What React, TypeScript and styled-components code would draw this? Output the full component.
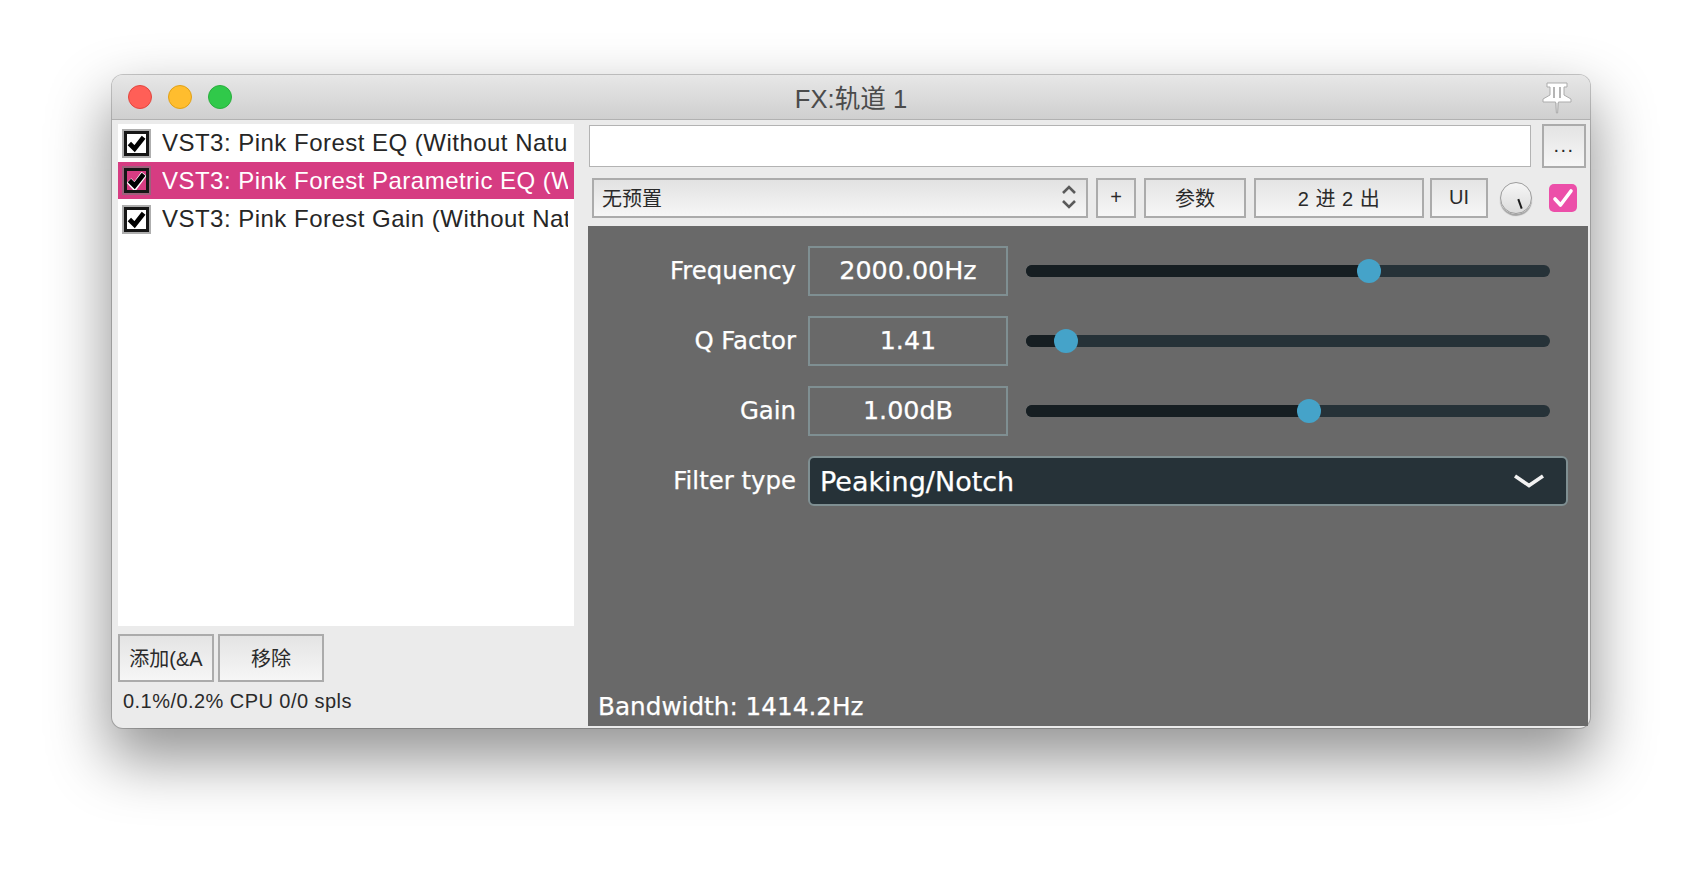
import React from "react";
import styled, { createGlobalStyle } from "styled-components";

const UI_FONT = `"Liberation Sans", "Noto Sans CJK SC", sans-serif`;
const PARAM_FONT = `"DejaVu Sans", sans-serif`;

const Global = createGlobalStyle`
  html, body { margin: 0; padding: 0; background: #fff; height: 100%; overflow: hidden; }
  * { box-sizing: border-box; }
`;

const Page = styled.div`
  width: 1702px;
  height: 876px;
  padding: 75px 0 0 112px;
  background: #fff;
  font-family: ${UI_FONT};
`;

const Window = styled.div`
  position: relative;
  width: 1478px;
  height: 653px;
  display: flex;
  flex-direction: column;
  background: #ebebeb;
  border-radius: 11px;
  box-shadow: 0 0 0 1px rgba(0, 0, 0, 0.2), 0 28px 60px 4px rgba(0, 0, 0, 0.42);
`;

const TitleBar = styled.div`
  flex: none;
  height: 45px;
  display: flex;
  align-items: center;
  padding-left: 16px;
  gap: 16px;
  position: relative;
  border-radius: 11px 11px 0 0;
  background: linear-gradient(#e7e7e7, #cfcfcf);
  border-bottom: 1px solid #b1b1b1;
`;

const Light = styled.span<{ $fill: string; $edge: string }>`
  width: 24px;
  height: 24px;
  border-radius: 50%;
  background: ${(p) => p.$fill};
  border: 1px solid ${(p) => p.$edge};
`;

const Title = styled.div`
  position: absolute;
  inset: 0;
  display: flex;
  align-items: center;
  justify-content: center;
  padding-bottom: 2px;
  font-size: 25.6px;
  color: #4b4b4b;
`;

const Pin = styled.svg`
  position: absolute;
  right: 17px;
  top: 7px;
`;

const Body = styled.div`
  flex: 1;
  display: flex;
  min-height: 0;
`;

const LeftPane = styled.div`
  flex: none;
  width: 476px;
  padding: 4px 0 0 6px;
  display: flex;
  flex-direction: column;
`;

const List = styled.div`
  width: 456px;
  height: 502px;
  background: #fff;
  flex: none;
`;

const Row = styled.div<{ $on?: boolean }>`
  height: ${(p) => (p.$on ? 37 : 38)}px;
  margin-bottom: ${(p) => (p.$on ? 1 : 0)}px;
  display: flex;
  align-items: center;
  padding: 0 6px 0 6px;
  gap: 13px;
  background: ${(p) => (p.$on ? "#d63c82" : "transparent")};
  color: ${(p) => (p.$on ? "#fff" : "#262626")};
`;

const RowCheck = styled.span<{ $on?: boolean }>`
  flex: none;
  width: 25px;
  height: 25px;
  border: 3px solid #161616;
  box-shadow: 0 0 0 2px rgba(120, 120, 120, 0.6);
  background: ${(p) => (p.$on ? "#d63c82" : "#fff")};
  display: flex;
  align-items: center;
  justify-content: center;
`;

const RowText = styled.span`
  flex: 1;
  min-width: 0;
  overflow: hidden;
  white-space: nowrap;
  font-size: 24px;
  letter-spacing: 0.48px;
  line-height: 30px;
`;

const ButtonRow = styled.div`
  display: flex;
  gap: 4px;
  margin-top: 8px;
`;

const Button = styled.div<{ $w: number; $h?: number; $ml?: number; $spread?: number }>`
  flex: none;
  width: ${(p) => p.$w}px;
  height: ${(p) => p.$h ?? 40}px;
  margin-left: ${(p) => p.$ml ?? 0}px;
  padding-bottom: 2px;
  display: flex;
  align-items: center;
  justify-content: center;
  border: 2px solid #ababab;
  background: linear-gradient(#e4e4e4, #f6f6f6);
  color: #2a2a2a;
  font-size: 20px;
  letter-spacing: ${(p) => p.$spread ?? 0}px;
  white-space: pre;
`;

const Status = styled.div`
  margin: 7px 0 0 5px;
  font-size: 20px;
  letter-spacing: 0.45px;
  line-height: 24px;
  color: #2a2a2a;
`;

const RightPane = styled.div`
  flex: 1;
  display: flex;
  flex-direction: column;
  min-width: 0;
`;

const PathRow = styled.div`
  display: flex;
  align-items: flex-start;
  height: 44px;
  margin-top: 4px;
  padding-left: 1px;
  gap: 11px;
`;

const PathInput = styled.div`
  flex: none;
  margin-top: 1px;
  width: 942px;
  height: 42px;
  background: #fff;
  border: 1px solid #b3b3b3;
`;

const ToolRow = styled.div`
  display: flex;
  align-items: center;
  height: 40px;
  margin-top: 10px;
  padding-left: 4px;
  gap: 8px;
`;

const Preset = styled.div`
  flex: none;
  width: 496px;
  height: 40px;
  display: flex;
  align-items: center;
  justify-content: space-between;
  padding: 0 9px 2px 8px;
  border: 2px solid #ababab;
  background: linear-gradient(#e2e2e2, #f6f6f6);
  color: #2a2a2a;
  font-size: 20px;
`;

const Knob = styled.div`
  flex: none;
  position: relative;
  width: 32px;
  height: 32px;
  margin-left: 4px;
  border-radius: 50%;
  background: linear-gradient(#f6f6f6, #dcdcdc);
  border: 1px solid #9d9d9d;
  box-shadow: 0 2px 1px rgba(0, 0, 0, 0.3);
`;

const KnobTick = styled.span`
  position: absolute;
  left: 18px;
  top: 16px;
  width: 1.5px;
  height: 10px;
  background: #1c1c1c;
  transform: rotate(-20deg);
`;

const Bypass = styled.div`
  flex: none;
  width: 28px;
  height: 28px;
  margin-left: 9px;
  border-radius: 5px;
  background: #ec4fa9;
  display: flex;
  align-items: center;
  justify-content: center;
`;

const Editor = styled.div`
  flex: none;
  margin-top: 8px;
  width: 1000px;
  height: 500px;
  padding: 20px 20px 0 0;
  background: #696969;
  color: #fff;
  font-family: ${PARAM_FONT};
  -webkit-text-stroke: 0.25px #fff;
  display: flex;
  flex-direction: column;
  gap: 20px;
`;

const ParamRow = styled.div`
  display: flex;
  align-items: center;
  height: 50px;
`;

const ParamLabel = styled.div`
  flex: none;
  width: 208px;
  margin-right: 12px;
  padding-bottom: 2px;
  text-align: right;
  font-size: 24.4px;
`;

const ValueBox = styled.div`
  flex: none;
  width: 200px;
  height: 50px;
  padding-bottom: 2px;
  display: flex;
  align-items: center;
  justify-content: center;
  border: 2px solid #7f8f92;
  font-size: 25.4px;
`;

const Track = styled.div`
  position: relative;
  flex: none;
  width: 524px;
  height: 12px;
  margin-left: 18px;
  border-radius: 6px;
  background: #263238;
`;

const TrackFill = styled.div`
  position: absolute;
  left: 0;
  top: 0;
  bottom: 0;
  border-radius: 6px 0 0 6px;
  background: #161e22;
`;

const Thumb = styled.div`
  position: absolute;
  top: -6px;
  width: 24px;
  height: 24px;
  margin-left: -12px;
  border-radius: 50%;
  background: #45a3c9;
`;

const Dropdown = styled.div`
  flex: 1;
  height: 50px;
  display: flex;
  align-items: center;
  justify-content: space-between;
  padding: 0 22px 0 10px;
  background: #263238;
  border: 2px solid #7f8f92;
  border-radius: 6px;
  font-size: 27px;
`;

const Bandwidth = styled.div`
  margin-top: auto;
  padding: 0 0 3px 10px;
  font-size: 24.7px;
  line-height: 32px;
`;

const Check = ({ dark }: { dark?: boolean }) => (
  <svg width="19" height="19" viewBox="0 0 20 20">
    {dark && <path d="M2 10 L8 16.5 L18 3" fill="none" stroke="#fff" strokeWidth="7" />}
    <path d="M2.5 10 L8 15.5 L17.5 3.5" fill="none" stroke="#000" strokeWidth="5" />
  </svg>
);

const items = [
  "VST3: Pink Forest EQ (Without Natural Phase)",
  "VST3: Pink Forest Parametric EQ (Without Natural Phase)",
  "VST3: Pink Forest Gain (Without Natural Phase)",
];

const params = [
  { label: "Frequency", value: "2000.00Hz", at: 343 / 524 },
  { label: "Q Factor", value: "1.41", at: 40 / 524 },
  { label: "Gain", value: "1.00dB", at: 283 / 524 },
];

export default function App() {
  return (
    <Page>
      <Global />
      <Window>
        <TitleBar>
          <Title>FX:轨道 1</Title>
          <Light $fill="#ff5f57" $edge="#e2463f" />
          <Light $fill="#ffbd2e" $edge="#e1a116" />
          <Light $fill="#30c94a" $edge="#2aae3e" />
          <Pin width="32" height="32" viewBox="0 0 32 32">
            <path
              d="M6 1 H26 V5 H23 V13 L30 17 V20 H17.4 L16.6 31 H15.4 L14.6 20 H2 V17 L9 13 V5 H6 Z"
              fill="#fff"
              stroke="#ababab"
              strokeWidth="1"
              strokeLinejoin="round"
            />
            <path d="M13 5 V16 M19 5 V16" stroke="#b5b5b5" strokeWidth="2" />
            <path d="M16 21 V30" stroke="#b5b5b5" strokeWidth="1" />
          </Pin>
        </TitleBar>
        <Body>
          <LeftPane>
            <List>
              {items.map((t, i) => (
                <Row key={t} $on={i === 1}>
                  <RowCheck $on={i === 1}>
                    <Check dark={i === 1} />
                  </RowCheck>
                  <RowText>{t}</RowText>
                </Row>
              ))}
            </List>
            <ButtonRow>
              <Button $w={96} $h={48}>添加(&amp;A</Button>
              <Button $w={106} $h={48}>移除</Button>
            </ButtonRow>
            <Status>0.1%/0.2% CPU 0/0 spls</Status>
          </LeftPane>
          <RightPane>
            <PathRow>
              <PathInput />
              <Button $w={44} $h={44} $spread={1.5}>...</Button>
            </PathRow>
            <ToolRow>
              <Preset>
                <span>无预置</span>
                <svg width="16" height="26" viewBox="0 0 16 26" fill="none" stroke="#5a5a5a" strokeWidth="2.6">
                  <path d="M2 9 L8 3 L14 9" />
                  <path d="M2 17 L8 23 L14 17" />
                </svg>
              </Preset>
              <Button $w={40}>+</Button>
              <Button $w={102}>参数</Button>
              <Button $w={170} $spread={0.5}>2 进 2 出</Button>
              <Button $w={58} $ml={-2}>UI</Button>
              <Knob>
                <KnobTick />
              </Knob>
              <Bypass>
                <svg width="22" height="20" viewBox="0 0 22 20" fill="none" stroke="#fff" strokeWidth="3.6" strokeLinecap="round" strokeLinejoin="round">
                  <path d="M3 11 L8.5 17 L19 3" />
                </svg>
              </Bypass>
            </ToolRow>
            <Editor>
              {params.map((p) => (
                <ParamRow key={p.label}>
                  <ParamLabel>{p.label}</ParamLabel>
                  <ValueBox>{p.value}</ValueBox>
                  <Track>
                    <TrackFill style={{ width: `${p.at * 100}%` }} />
                    <Thumb style={{ left: `${p.at * 100}%` }} />
                  </Track>
                </ParamRow>
              ))}
              <ParamRow>
                <ParamLabel>Filter type</ParamLabel>
                <Dropdown>
                  <span>Peaking/Notch</span>
                  <svg width="30" height="14" viewBox="0 0 30 14" fill="none" stroke="#f2f2f2" strokeWidth="3.6">
                    <path d="M1 2 L15 11.5 L29 2" />
                  </svg>
                </Dropdown>
              </ParamRow>
              <Bandwidth>Bandwidth: 1414.2Hz</Bandwidth>
            </Editor>
          </RightPane>
        </Body>
      </Window>
    </Page>
  );
}
